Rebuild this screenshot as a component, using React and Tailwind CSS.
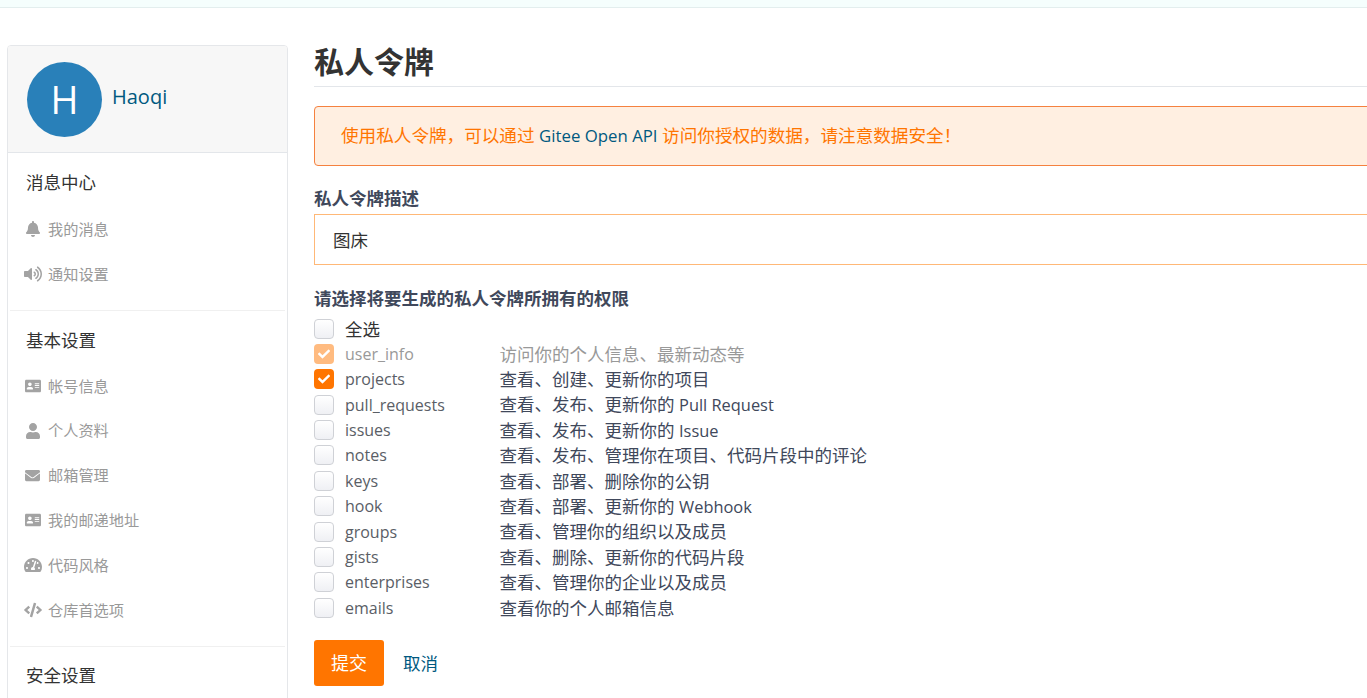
import React from "react";
import { FaBell, FaVolumeUp, FaAddressCard, FaUser, FaEnvelope, FaTachometerAlt, FaCode, FaCheck } from "react-icons/fa";

const Item = ({ icon: I, size = 15, label, h = "h-[44.8px]" }) => (
  <div className={`flex items-center ${h} pl-[15px] text-[15.2px] text-[#999]`}>
    <span className="w-[19px] flex justify-center shrink-0 text-[#a3a3a3]"><I size={size} /></span>
    <span className="ml-[6px]">{label}</span>
  </div>
);
const Head = ({ children, cls }) => (
  <div className={`pl-[18px] text-[17.5px] leading-[24px] text-[#333] ${cls}`}>{children}</div>
);
const perms = [
  ["user_info", "访问你的个人信息、最新动态等", "disabled"],
  ["projects", "查看、创建、更新你的项目", "on"],
  ["pull_requests", "查看、发布、更新你的 ", null, "Pull Request"],
  ["issues", "查看、发布、更新你的 ", null, "Issue"],
  ["notes", "查看、发布、管理你在项目、代码片段中的评论"],
  ["keys", "查看、部署、删除你的公钥"],
  ["hook", "查看、部署、更新你的 ", null, "Webhook"],
  ["groups", "查看、管理你的组织以及成员"],
  ["gists", "查看、删除、更新你的代码片段"],
  ["enterprises", "查看、管理你的企业以及成员"],
  ["emails", "查看你的个人邮箱信息"],
];
const Box = ({ state }) => {
  if (state === "on") return <span className="w-[20px] h-[20px] rounded-[4px] bg-[#ff7500] flex items-center justify-center text-white"><FaCheck size={12} /></span>;
  if (state === "disabled") return <span className="w-[20px] h-[20px] rounded-[4px] bg-[#ffbb80] flex items-center justify-center text-white"><FaCheck size={12} /></span>;
  return <span className="w-[20px] h-[20px] rounded-[4px] border border-[#cfd1d6] bg-gradient-to-b from-white to-[#eff0f4] block" />;
};
const Row = ({ name, desc, latin, state }) => (
  <div className={`flex items-center h-[25.36px] text-[17.5px] ${state === "disabled" ? "text-[#999]" : "text-[#40485b]"}`}>
    <Box state={state} />
    <span className={`ml-[11px] w-[154.5px] text-[16px] ${state === "disabled" ? "text-[#999]" : "text-[#5a5e66]"}`}>{name}</span>
    <span className="whitespace-pre">{desc}{latin && <span className="text-[16.4px]">{latin}</span>}</span>
  </div>
);

export default function App() {
  return (
    <div className="w-full h-[698px] overflow-hidden bg-white" style={{ fontFamily: '"Open Sans","Noto Sans CJK SC",sans-serif' }}>
      <div className="h-[8px] bg-[#f5fefd] border-b border-[#e3eeee]" />
      <div className="flex pt-[37px] pl-[7px]">
        <aside className="w-[281px] h-[700px] shrink-0 border border-[#e5e7ea] rounded-[4px] overflow-hidden">
          <div className="h-[107px] bg-[#f7f7f7] border-b border-[#e3e6ea] flex items-center pl-[19px]">
            <div className="w-[75px] h-[75px] rounded-full bg-[#2980b9] text-white flex items-center justify-center text-[38px]">H</div>
            <span className="ml-[10px] text-[20px] text-[#005980] -mt-[4px]">Haoqi</span>
          </div>
          <Head cls="pt-[17px] pb-[13px]">消息中心</Head>
          <Item icon={FaBell} size={16} label="我的消息" />
          <Item icon={FaVolumeUp} size={18} label="通知设置" />
          <div className="h-px bg-[#f0f0f0] mx-[2px] mt-[13px]" />
          <Head cls="pt-[17px] pb-[12px]">基本设置</Head>
          <Item icon={FaAddressCard} size={16} label="帐号信息" />
          <Item icon={FaUser} size={16} label="个人资料" />
          <Item icon={FaEnvelope} label="邮箱管理" />
          <Item icon={FaAddressCard} size={16} label="我的邮递地址" />
          <Item icon={FaTachometerAlt} size={18} label="代码风格" />
          <Item icon={FaCode} size={18} label="仓库首选项" />
          <div className="h-px bg-[#f0f0f0] mx-[2px] mt-[14px]" />
          <Head cls="pt-[16px]">安全设置</Head>
        </aside>
        <main className="ml-[26px] w-[1100px] shrink-0">
          <h1 className="h-[43px] border-b border-[#e3e6ea] text-[30px] leading-[36px] font-bold text-[#333] -mt-[1px]">私人令牌</h1>
          <div className="mt-[19px] h-[60px] flex items-center pl-[26px] pb-[1px] bg-[#ffefe1] border border-[#f5813f] rounded-[4px] text-[17.6px] text-[#ff7500] whitespace-pre">
            使用私人令牌，可以通过 <span className="text-[#005980] text-[16.8px]">Gitee Open API</span> 访问你授权的数据，请注意数据安全！
          </div>
          <div className="mt-[20px] text-[17.5px] leading-[24px] font-bold text-[#40485b]">私人令牌描述</div>
          <div className="mt-[4px] h-[51px] border border-[#ffb877] flex items-center pl-[18px] pt-[1px] text-[17.5px] text-[#333]">图床</div>
          <div className="mt-[21px] text-[17.5px] leading-[24px] font-bold text-[#40485b]">请选择将要生成的私人令牌所拥有的权限</div>
          <div className="mt-[6px]">
            <Row name={<span className="text-[#333] text-[17.5px]">全选</span>} desc="" />
            {perms.map((p) => <Row key={p[0]} name={p[0]} desc={p[1]} state={p[2]} latin={p[3]} />)}
          </div>
          <div className="mt-[20px] flex items-center">
            <button className="w-[70px] h-[46px] bg-[#ff7500] rounded-[3px] text-white text-[18px]">提交</button>
            <span className="ml-[19px] text-[17.5px] text-[#005980]">取消</span>
          </div>
        </main>
      </div>
    </div>
  );
}
